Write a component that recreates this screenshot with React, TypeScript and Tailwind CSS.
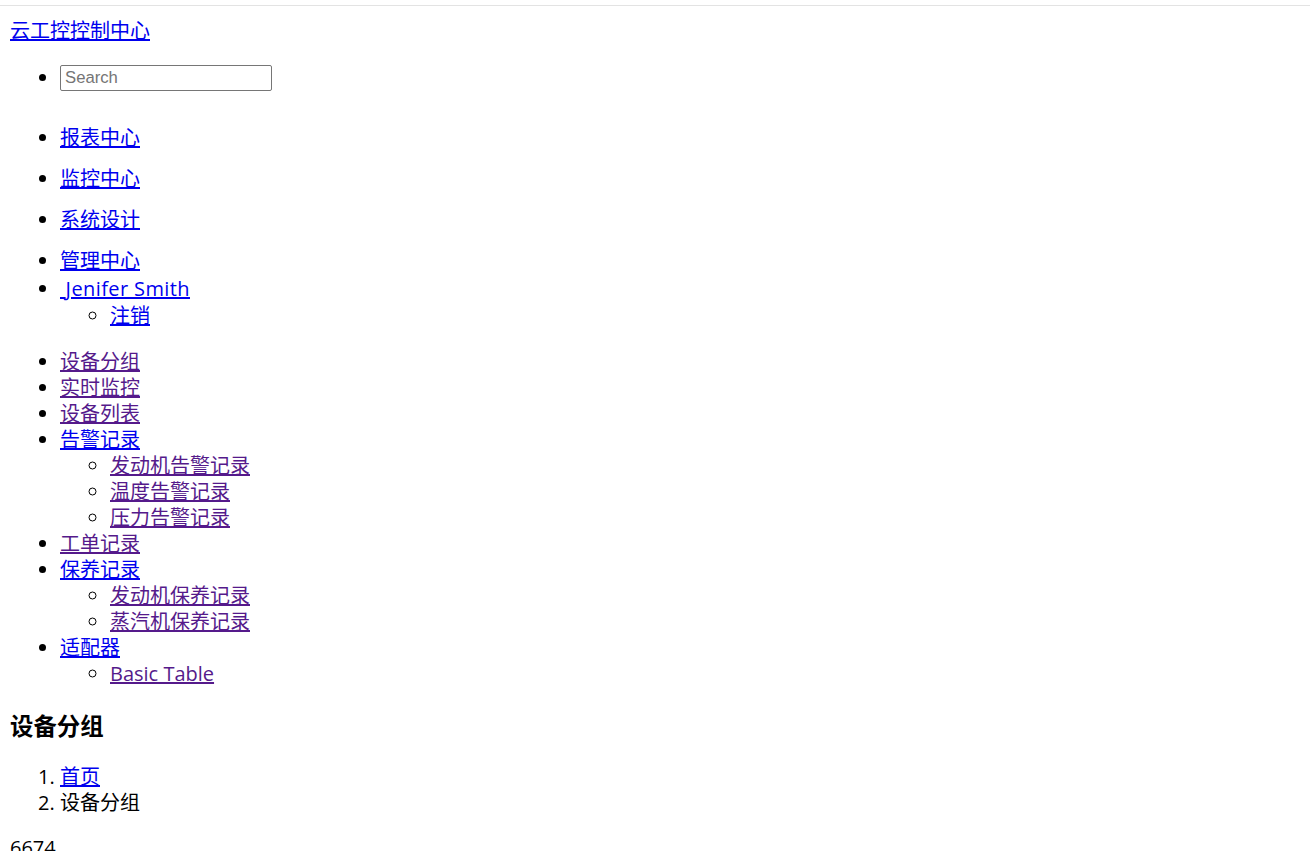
import React from 'react';

const blue = 'text-[#0000ee] underline';
const visited = 'text-[#551a8b] underline';

const App: React.FC = () => {
  return (
    <div className="min-h-screen bg-white text-black text-[20px] leading-[26px] [font-family:'Open_Sans','Noto_Sans_CJK_SC',sans-serif]">
      <div className="pt-[5px]">
        <div className="h-px bg-[#e3e3e3]" />
      </div>

      <div className="px-[10px]">
        <a href="#" className={`${blue} block w-fit mt-[12px]`}>云工控控制中心</a>

        <ul className="list-disc pl-[50px] mt-[21px]">
          <li className="h-[26px]">
            <input
              type="text"
              placeholder="Search"
              className="w-[212px] h-[26px] align-top border border-[#767676] rounded-[2px] px-[4px] text-[16.7px] [font-family:'Liberation_Sans',Arial,sans-serif] placeholder:text-[#757575] outline-none"
            />
          </li>
        </ul>

        <ul className="list-disc pl-[50px] mt-[34px]">
          <li className="mb-[14.5px]"><a href="#" className={blue}>报表中心</a></li>
          <li className="mb-[15.5px]"><a href="#" className={blue}>监控中心</a></li>
          <li className="mb-[14.5px]"><a href="#" className={blue}>系统设计</a></li>
          <li className="mb-[2.5px]"><a href="#" className={blue}>管理中心</a></li>
          <li>
            <a href="#" className={`${blue} tracking-[0.4px]`}>{'\u00a0'}Jenifer Smith</a>
            <ul className="list-[circle] pl-[50px] mt-[1px]">
              <li><a href="#" className={blue}>注销</a></li>
            </ul>
          </li>
        </ul>

        <ul className="list-disc pl-[50px] mt-[19.5px]">
          <li><a href="#" className={visited}>设备分组</a></li>
          <li><a href="#" className={visited}>实时监控</a></li>
          <li><a href="#" className={visited}>设备列表</a></li>
          <li>
            <a href="#" className={blue}>告警记录</a>
            <ul className="list-[circle] pl-[50px]">
              <li><a href="#" className={visited}>发动机告警记录</a></li>
              <li><a href="#" className={visited}>温度告警记录</a></li>
              <li><a href="#" className={visited}>压力告警记录</a></li>
            </ul>
          </li>
          <li><a href="#" className={visited}>工单记录</a></li>
          <li>
            <a href="#" className={blue}>保养记录</a>
            <ul className="list-[circle] pl-[50px]">
              <li><a href="#" className={visited}>发动机保养记录</a></li>
              <li><a href="#" className={visited}>蒸汽机保养记录</a></li>
            </ul>
          </li>
          <li>
            <a href="#" className={blue}>适配器</a>
            <ul className="list-[circle] pl-[50px]">
              <li><a href="#" className={visited}>Basic Table</a></li>
            </ul>
          </li>
        </ul>

        <h3 className="mt-[23px] text-[23.4px] leading-[32px] font-bold">设备分组</h3>

        <ol className="list-decimal pl-[50px] mt-[22px]">
          <li><a href="#" className={blue}>首页</a></li>
          <li>设备分组</li>
        </ol>

        <p className="mt-[19px]">6674</p>
      </div>
    </div>
  );
};

export default App;
